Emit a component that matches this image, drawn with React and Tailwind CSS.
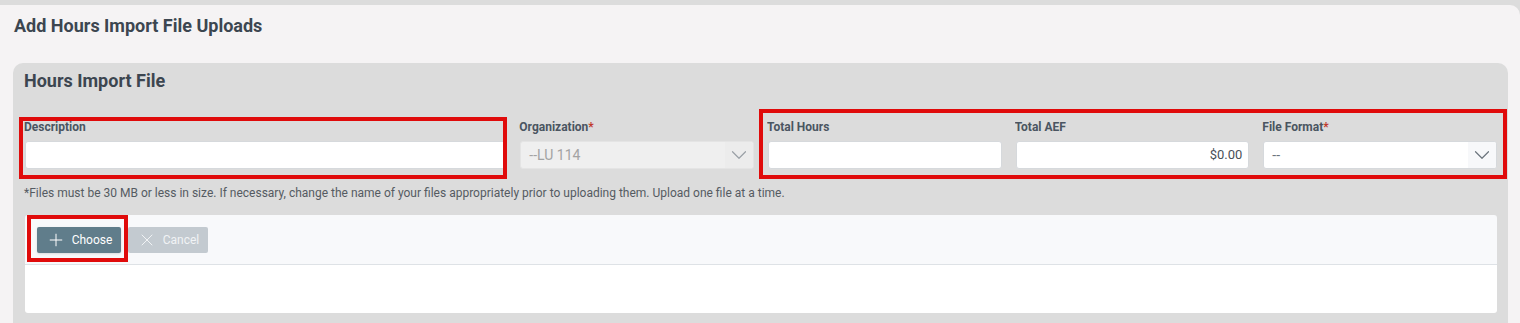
import React from 'react';
import { Plus, X, ChevronDown } from 'lucide-react';

const font = { fontFamily: 'Roboto, "Liberation Sans", sans-serif' };

const Label = ({ text, required }) => (
  <div className="-ml-[1px] text-[12px] font-bold leading-[18px] text-[#4a5561] mb-[5px] truncate">
    {text}
    {required && <span className="text-[#c0392b]">*</span>}
  </div>
);

const TextInput = ({ value = '', align = 'left' }) => (
  <div
    className={`h-[28px] bg-white border border-[#d6d9dc] rounded-[3px] flex items-center px-[6px] text-[13px] text-[#495057] ${
      align === 'right' ? 'justify-end' : ''
    }`}
  >
    {value}
  </div>
);

const SelectInput = ({ value, disabled }) => (
  <div
    className={`h-[28px] border rounded-[3px] flex items-stretch overflow-hidden text-[14px] ${
      disabled ? 'bg-[#efefef] border-[#e4e4e4] text-[#a3a3a3]' : 'bg-white border-[#d6d9dc] text-[#6c757d]'
    }`}
  >
    <div className="flex-1 flex items-center px-[8px]">{value}</div>
    <div
      className={`w-[28px] flex items-center justify-center ${
        disabled ? 'bg-[#ececec]' : 'bg-[#f7f8fa]'
      }`}
    >
      <ChevronDown
        size={26}
        strokeWidth={1.1}
        className={disabled ? 'text-[#9aa0a6]' : 'text-[#6c757d]'}
      />
    </div>
  </div>
);

const App = () => {
  return (
    <div style={font} className="relative w-[1520px] h-[323px] overflow-hidden bg-[#dcdcdc] pt-[5px]">
      <div className="h-full bg-[#f5f3f4] rounded-tr-[10px] pt-[9px]">
        <h1 className="pl-[14px] text-[18px] font-bold leading-[24px] text-[#3c4650]">
          Add Hours Import File Uploads
        </h1>

        <div className="mt-[25px] ml-[13px] mr-[12px] h-[300px] bg-[#dcdcdc] rounded-t-[10px] pt-[6px] pl-[12px] pr-[11px]">
          <h2 className="-ml-[1px] text-[18px] font-bold leading-[24px] text-[#3c4650]">Hours Import File</h2>

          <div className="mt-[25px] grid grid-cols-6 gap-x-[14px]">
            <div className="col-span-2">
              <Label text="Description" />
              <TextInput />
            </div>
            <div>
              <Label text="Organization" required />
              <SelectInput value="--LU 114" disabled />
            </div>
            <div>
              <Label text="Total Hours" />
              <TextInput />
            </div>
            <div>
              <Label text="Total AEF" />
              <TextInput value="$0.00" align="right" />
            </div>
            <div>
              <Label text="File Format" required />
              <SelectInput value="--" />
            </div>
          </div>

          <p className="mt-[16px] -ml-[1px] text-[12px] leading-[16px] text-[#555b62]">
            *Files must be 30 MB or less in size. If necessary, change the name of your files appropriately prior to
            uploading them. Upload one file at a time.
          </p>

          <div className="mt-[14px] rounded-[3px] overflow-hidden">
            <div className="h-[50px] bg-[#f8f9fb] border-b border-[#dee2e6] flex items-center gap-[7px] pl-[12px]">
              <button className="h-[26px] w-[84px] rounded-[2px] bg-[#607d8b] text-white text-[12px] font-normal flex items-center justify-center gap-[6px] shadow-sm">
                <Plus size={20} strokeWidth={1.2} />
                Choose
              </button>
              <button className="h-[26px] w-[80px] rounded-[2px] bg-[#c3cad0] text-[#f1f3f5] text-[12px] font-normal flex items-center justify-center gap-[6px]">
                <X size={20} strokeWidth={1.2} />
                Cancel
              </button>
            </div>
            <div className="h-[48px] bg-white" />
          </div>
        </div>
      </div>

      {/* annotation highlights */}
      <div className="absolute left-[19px] top-[117px] w-[488px] h-[62px] border-4 border-[#e00b0b]" />
      <div className="absolute left-[759px] top-[109px] w-[748px] h-[70px] border-4 border-[#e00b0b]" />
      <div className="absolute left-[27px] top-[215px] w-[101px] h-[47px] border-4 border-[#e00b0b]" />
    </div>
  );
};

export default App;
